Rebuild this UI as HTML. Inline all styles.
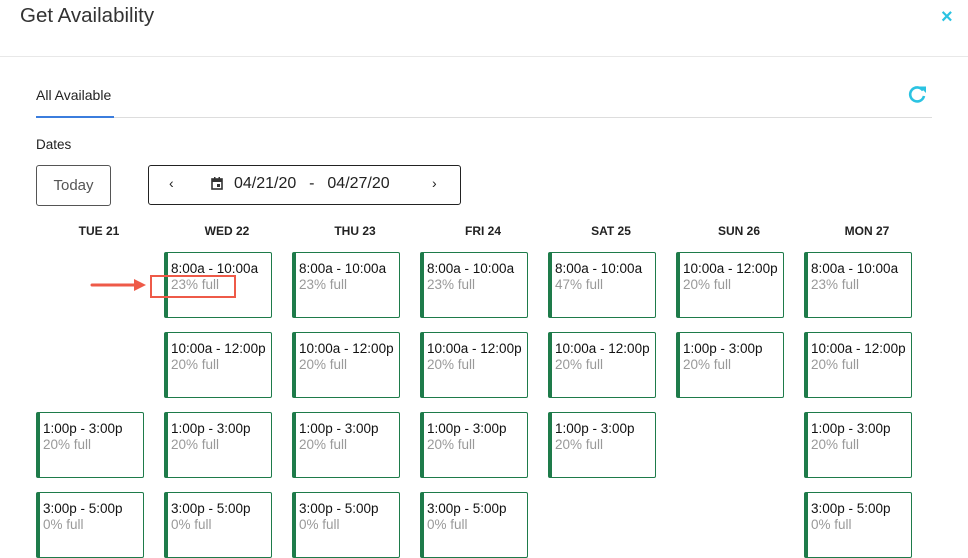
<!DOCTYPE html><html><head><style>
body{margin:0;width:968px;height:526px;overflow:hidden;background:#fff;font-family:"Liberation Sans",sans-serif;position:relative;color:#222}
.a{position:absolute}
.card{position:absolute;width:103px;height:64px;border:1px solid #1e7b4a;border-left:4px solid #1e7b4a;border-radius:2px;box-sizing:content-box}
.card .t{position:absolute;left:3px;top:8px;font-size:13.5px;color:#111;white-space:nowrap}
.card .f{position:absolute;left:3px;top:24px;font-size:13.5px;color:#999}
.h{position:absolute;top:224px;width:108px;text-align:center;font-size:12px;font-weight:bold;color:#222}
</style></head><body>
<div class="a" style="left:20px;top:4px;font-size:20.5px;color:#333">Get Availability</div>
<div class="a" style="left:941px;top:6px;color:#2bc3e2;font-size:20px;font-weight:bold">×</div>
<div class="a" style="left:0;top:56px;width:968px;height:1px;background:#e8e8e8"></div>
<div class="a" style="left:36px;top:87px;font-size:14px;color:#222">All Available</div>
<div class="a" style="left:36px;top:117px;width:896px;height:1px;background:#ddd"></div>
<div class="a" style="left:36px;top:116px;width:78px;height:2px;background:#3b7ddd"></div>
<svg class="a" style="left:907px;top:84px" width="22" height="20" viewBox="0 0 22 20"><path d="M16 6.5A7 7 0 1 0 17 12" fill="none" stroke="#2bc3e2" stroke-width="2.6"/><path d="M12.5 2.5L19 2.5L19 9Z" fill="#2bc3e2"/></svg>
<div class="a" style="left:36px;top:137px;font-size:13.5px">Dates</div>
<div class="a" style="left:36px;top:165px;width:73px;height:39px;border:1px solid #555;border-radius:3px;text-align:center;line-height:39px;font-size:15px;color:#555">Today</div>
<div class="a" style="left:148px;top:165px;width:311px;height:38px;border:1px solid #222;border-radius:3px"></div>
<div class="a" style="left:169px;top:175px;font-size:14px">‹</div>
<div class="a" style="left:432px;top:175px;font-size:14px">›</div>
<svg class="a" style="left:211px;top:177px" width="12" height="13" viewBox="0 0 12 13"><rect x="1" y="2" width="10" height="10" fill="none" stroke="#333" stroke-width="1.6"/><rect x="1" y="2" width="10" height="3" fill="#333"/><rect x="6" y="7" width="3" height="3" fill="#333"/><rect x="3" y="0" width="1.5" height="3" fill="#333"/><rect x="7.5" y="0" width="1.5" height="3" fill="#333"/></svg>
<div class="a" style="left:234px;top:175px;font-size:16px;color:#222;word-spacing:2px">04/21/20 &nbsp;- &nbsp;04/27/20</div>
<div class="h" style="left:45px">TUE 21</div><div class="h" style="left:173px">WED 22</div><div class="h" style="left:301px">THU 23</div><div class="h" style="left:429px">FRI 24</div><div class="h" style="left:557px">SAT 25</div><div class="h" style="left:685px">SUN 26</div><div class="h" style="left:813px">MON 27</div>
<div id="g"></div>
<svg class="a" style="left:90px;top:278px" width="60" height="14"><path d="M2 7H46" stroke="#ee5a48" stroke-width="3" stroke-linecap="round"/><path d="M44 1L56 7L44 13Z" fill="#ee5a48"/></svg>
<div class="a" style="left:150px;top:275px;width:82px;height:19px;border:2px solid #ee5a48"></div>
<script>
var T=["8:00a - 10:00a","10:00a - 12:00p","1:00p - 3:00p","3:00p - 5:00p"],F=["23% full","20% full","20% full","0% full"];
var cols=[[2,3],[0,1,2,3],[0,1,2,3],[0,1,2,3],[0,1,2],[1,2],[0,1,2,3]];var h="";
cols.forEach(function(r,c){r.forEach(function(s,i){var row=(c==5)?i:s;var f=F[s];if(c==4&&s==0)f="47% full";h+='<div class="card" style="left:'+(36+c*128)+'px;top:'+(252+row*80)+'px"><div class="t">'+T[s]+'</div><div class="f">'+f+'</div></div>';});});
document.getElementById("g").innerHTML=h;
</script>
</body></html>
